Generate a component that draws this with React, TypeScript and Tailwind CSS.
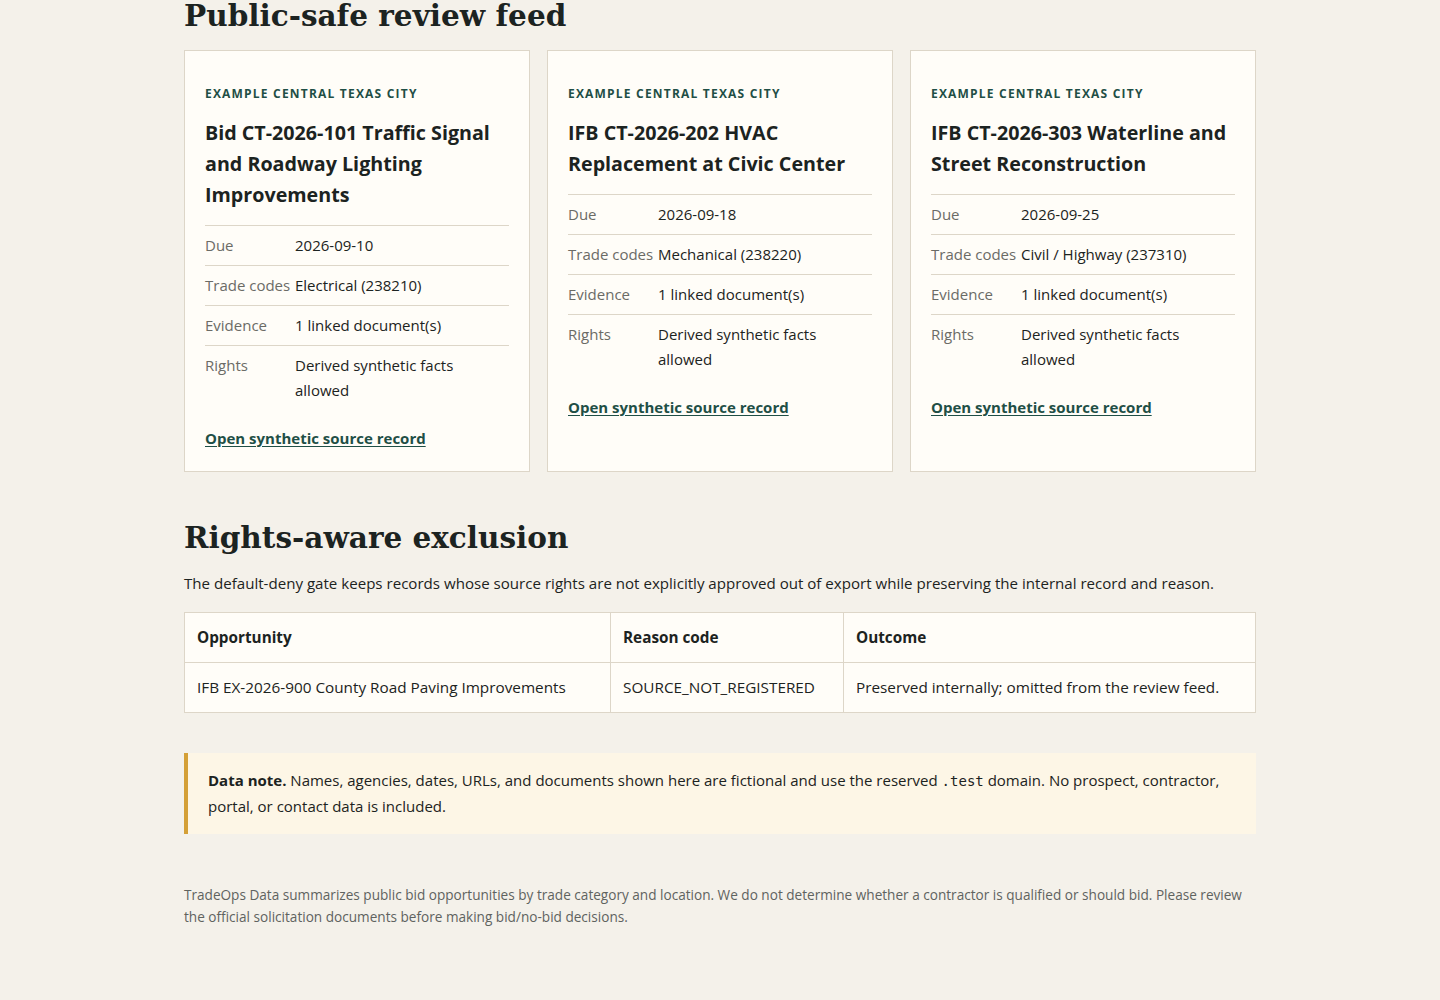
const cards = [
  {
    title: 'Bid CT-2026-101 Traffic Signal and Roadway Lighting Improvements',
    due: '2026-09-10',
    trade: 'Electrical (238210)',
  },
  {
    title: 'IFB CT-2026-202 HVAC Replacement at Civic Center',
    due: '2026-09-18',
    trade: 'Mechanical (238220)',
  },
  {
    title: 'IFB CT-2026-303 Waterline and Street Reconstruction',
    due: '2026-09-25',
    trade: 'Civil / Highway (237310)',
  },
];

const serif = "font-['DejaVu_Serif',Georgia,serif]";

function Row({ label, value, last }: { label: string; value: string; last?: boolean }) {
  return (
    <div className={`grid grid-cols-[90px_1fr] border-t border-[#ddd6c8] leading-[25px] ${last ? 'pt-[7px]' : 'py-[7px]'}`}>
      <dt className="text-[#6b6b66]">{label}</dt>
      <dd className="text-[#1c2321]">{value}</dd>
    </div>
  );
}

function Card({ title, due, trade }: { title: string; due: string; trade: string }) {
  return (
    <article className="border border-[#ddd6c8] bg-[#fffdf8] px-5 pt-[34px] pb-[21px]">
      <p className="text-[12px] font-bold uppercase tracking-[0.1em] text-[#1f4f46]">
        Example Central Texas City
      </p>
      <h3 className="mt-[14px] text-[19.7px] font-bold leading-[31px] text-[#1c2321]">{title}</h3>
      <dl className="mt-[15px] text-[15px]">
        <Row label="Due" value={due} />
        <Row label="Trade codes" value={trade} />
        <Row label="Evidence" value="1 linked document(s)" />
        <Row label="Rights" value="Derived synthetic facts allowed" last />
      </dl>
      <a href="#" className="mt-[24px] block text-[15px] font-bold text-[#1f4f46] underline underline-offset-2">
        Open synthetic source record
      </a>
    </article>
  );
}

export default function App() {
  return (
    <div className="min-h-screen bg-[#f4f1ea] font-['Open_Sans','Noto_Sans',sans-serif] text-[#1c2321]">
      <main className="mx-auto w-[1072px] -mt-[8px] pb-[72px]">
        <h2 className={`${serif} text-[29.5px] font-bold leading-[48px] text-[#1c2321]`}>Public-safe review feed</h2>
        <div className="mt-[10px] grid grid-cols-3 gap-[17px]">
          {cards.map((c) => (
            <Card key={c.title} {...c} />
          ))}
        </div>

        <h2 className={`${serif} mt-[38px] text-[29.5px] font-bold leading-[56px] text-[#1c2321]`}>Rights-aware exclusion</h2>
        <p className="mt-[4px] text-[15.1px] leading-[26px]">
          The default-deny gate keeps records whose source rights are not explicitly approved out of export while preserving the internal record and reason.
        </p>
        <table className="mt-[16px] w-full border-collapse bg-[#fffdf8] text-left text-[15.3px]">
          <thead>
            <tr>
              <th className="w-[426px] border border-[#ddd6c8] px-3 py-[12px] font-bold leading-[25px]">Opportunity</th>
              <th className="w-[233px] border border-[#ddd6c8] px-3 py-[12px] font-bold leading-[25px]">Reason code</th>
              <th className="border border-[#ddd6c8] px-3 py-[12px] font-bold leading-[25px]">Outcome</th>
            </tr>
          </thead>
          <tbody>
            <tr>
              <td className="border border-[#ddd6c8] px-3 py-[12px] leading-[25px]">IFB EX-2026-900 County Road Paving Improvements</td>
              <td className="border border-[#ddd6c8] px-3 py-[12px] leading-[25px]">SOURCE_NOT_REGISTERED</td>
              <td className="border border-[#ddd6c8] px-3 py-[12px] leading-[25px]">Preserved internally; omitted from the review feed.</td>
            </tr>
          </tbody>
        </table>

        <div className="mt-[40px] border-l-4 border-[#d4a037] bg-[#fdf6e6] py-[15px] pl-5 pr-4 text-[15px] leading-[25px]">
          <strong className="font-bold">Data note.</strong> Names, agencies, dates, URLs, and documents shown here are fictional and use the reserved{' '}
          <code className="font-['DejaVu_Sans_Mono',monospace] text-[14px]">.test</code> domain. No prospect, contractor, portal, or contact data is included.
        </div>

        <footer className="mt-[50px] text-[13.6px] leading-[22px] text-[#5f635f]">
          TradeOps Data summarizes public bid opportunities by trade category and location. We do not determine whether a contractor is qualified or should bid. Please review the official solicitation documents before making bid/no-bid decisions.
        </footer>
      </main>
    </div>
  );
}
